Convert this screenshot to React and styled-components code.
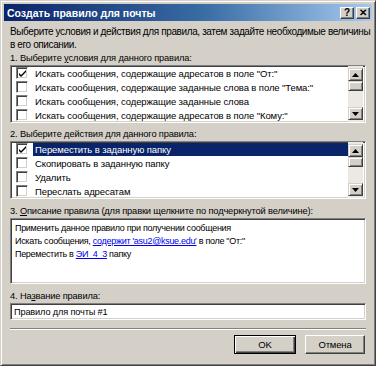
import React from "react";
import styled, { createGlobalStyle } from "styled-components";

const Global = createGlobalStyle`
  html, body {
    margin: 0;
    padding: 0;
    background: #d4d0c8;
  }
  body {
    font-family: "Liberation Sans", Arial, sans-serif;
    font-size: 10px;
    letter-spacing: -0.15px;
    color: #000;
  }
`;

const Window = styled.div`
  width: 376px;
  height: 366px;
  box-sizing: border-box;
  background: #d4d0c8;
  border: 1px solid;
  border-color: #d4d0c8 #404040 #404040 #d4d0c8;
  box-shadow: inset 1px 1px 0 #fff, inset -1px -1px 0 #808080;
  padding: 3px;
  display: flex;
  flex-direction: column;
  overflow: hidden;
`;

const TitleBar = styled.div`
  height: 17px;
  flex: none;
  display: flex;
  align-items: center;
  padding: 0 2px 0 3px;
  background: linear-gradient(to right, #0a246a 0%, #3a6ea5 55%, #a6caf0 100%);
  color: #fff;
  font-weight: bold;
  font-size: 10.5px;
`;

const Title = styled.span`
  flex: 1;
  letter-spacing: 0;
`;

const CapButton = styled.div`
  width: 14px;
  height: 12px;
  margin-left: ${(p) => (p.$gap ? "2px" : "0")};
  box-sizing: border-box;
  background: #d4d0c8;
  border: 1px solid;
  border-color: #fff #404040 #404040 #fff;
  box-shadow: inset -1px -1px 0 #808080;
  color: #000;
  font-size: 10px;
  font-weight: bold;
  letter-spacing: 0;
  display: flex;
  align-items: center;
  justify-content: center;
  line-height: 1;
`;

const Body = styled.div`
  flex: 1;
  display: flex;
  flex-direction: column;
  padding: 4px 6px 0 6px;
`;

const Intro = styled.p`
  margin: 0 0 1px 0;
  line-height: 13px;
  white-space: nowrap;
  letter-spacing: -0.38px;
`;

const Label = styled.div`
  line-height: 13px;
  font-size: 9.3px;
  white-space: nowrap;
  u {
    text-decoration: underline;
  }
`;

const Sunken = styled.div`
  box-sizing: border-box;
  background: #fff;
  border: 1px solid;
  border-color: #808080 #fff #fff #808080;
  box-shadow: inset 1px 1px 0 #404040, inset -1px -1px 0 #d4d0c8;
`;

const ListBox = styled(Sunken)`
  height: 58px;
  flex: none;
  display: flex;
  padding: 0 2px 0 2px;
  margin-bottom: ${(p) => p.$after}px;
`;

const Rows = styled.div`
  flex: 1;
  display: flex;
  flex-direction: column;
  overflow: hidden;
`;

const Row = styled.div`
  height: 14px;
  flex: none;
  display: flex;
  align-items: center;
  padding-left: 3px;
  white-space: nowrap;
  font-size: 9.5px;
  letter-spacing: -0.1px;
`;

const Check = styled.span`
  width: 12px;
  height: 12px;
  flex: none;
  box-sizing: border-box;
  background: #fff;
  border: 1px solid;
  border-color: #808080 #fff #fff #808080;
  box-shadow: inset 1px 1px 0 #404040, inset -1px -1px 0 #d4d0c8;
  display: flex;
  align-items: center;
  justify-content: center;
  margin-right: 5px;
`;

const RowText = styled.span`
  padding: 0 2px;
  line-height: 13px;
  background: ${(p) => (p.$selected ? "#0a246a" : "transparent")};
  color: ${(p) => (p.$selected ? "#fff" : "#000")};
  flex: ${(p) => (p.$selected ? 1 : "none")};
`;

const ScrollBar = styled.div`
  width: 15px;
  flex: none;
  display: flex;
  flex-direction: column;
  padding: 2px 0;
  background: #ece9e4;
`;

const ScrollBtn = styled.div`
  height: 13px;
  flex: none;
  box-sizing: border-box;
  background: #d4d0c8;
  border: 1px solid;
  border-color: #d4d0c8 #404040 #404040 #d4d0c8;
  box-shadow: inset 1px 1px 0 #fff, inset -1px -1px 0 #808080;
  display: flex;
  align-items: center;
  justify-content: center;
`;

const Track = styled.div`
  flex: 1;
`;

const Thumb = styled(ScrollBtn)`
  height: 10px;
`;

const DescBox = styled(Sunken)`
  height: 66px;
  flex: none;
  padding: 3px 4px;
  line-height: 13px;
  font-size: 9px;
  letter-spacing: -0.3px;
  margin-bottom: 6px;
  white-space: nowrap;
`;

const Link = styled.span`
  color: #0000ee;
  text-decoration: underline;
`;

const Input = styled(Sunken)`
  height: 17px;
  flex: none;
  padding: 0 3px;
  font-size: 9.2px;
  display: flex;
  align-items: center;
`;

const Separator = styled.div`
  margin-top: 8px;
  height: 0;
  flex: none;
  border-top: 1px solid #808080;
  border-bottom: 1px solid #fff;
`;

const Footer = styled.div`
  display: flex;
  justify-content: flex-end;
  gap: 9px;
  padding-top: 5px;
  padding-right: 1px;
  font-size: 9.5px;
`;

const Button = styled.div`
  width: ${(p) => (p.$default ? "62px" : "60px")};
  height: 19px;
  box-sizing: border-box;
  background: #d4d0c8;
  border: 1px solid;
  border-color: ${(p) => (p.$default ? "#000" : "#fff #404040 #404040 #fff")};
  box-shadow: ${(p) =>
    p.$default
      ? "inset 1px 1px 0 #fff, inset -1px -1px 0 #404040, inset -2px -2px 0 #808080"
      : "inset -1px -1px 0 #808080"};
  display: flex;
  align-items: center;
  justify-content: center;
`;

const Arrow = ({ down }) => (
  <svg width="7" height="4" viewBox="0 0 7 4">
    <path d={down ? "M0 0h7L3.5 4z" : "M3.5 0L7 4H0z"} fill="#000" />
  </svg>
);

const Tick = () => (
  <svg width="7" height="7" viewBox="0 0 7 7">
    <path d="M0 3l2 2 5-5v2L2 7 0 5z" fill="#000" />
  </svg>
);

function List({ items, selected, after }) {
  return (
    <ListBox $after={after}>
      <Rows>
        {items.map((it, i) => (
          <Row key={i}>
            <Check>{it.checked && <Tick />}</Check>
            <RowText $selected={selected === i}>{it.text}</RowText>
          </Row>
        ))}
      </Rows>
      <ScrollBar>
        <ScrollBtn>
          <Arrow />
        </ScrollBtn>
        <Thumb />
        <Track />
        <ScrollBtn>
          <Arrow down />
        </ScrollBtn>
      </ScrollBar>
    </ListBox>
  );
}

const conditions = [
  { checked: true, text: "Искать сообщения, содержащие адресатов в поле \"От:\"" },
  { checked: false, text: "Искать сообщения, содержащие заданные слова в поле \"Тема:\"" },
  { checked: false, text: "Искать сообщения, содержащие заданные слова" },
  { checked: false, text: "Искать сообщения, содержащие адресатов в поле \"Кому:\"" },
];

const actions = [
  { checked: true, text: "Переместить в заданную папку" },
  { checked: false, text: "Скопировать в заданную папку" },
  { checked: false, text: "Удалить" },
  { checked: false, text: "Переслать адресатам" },
];

export default function App() {
  return (
    <>
      <Global />
      <Window>
        <TitleBar>
          <Title>Создать правило для почты</Title>
          <CapButton>?</CapButton>
          <CapButton $gap>✕</CapButton>
        </TitleBar>
        <Body>
          <Intro>
            Выберите условия и действия для правила, затем задайте необходимые величины
            <br />в его описании.
          </Intro>
          <Label>
            1. Выберите <u>у</u>словия для данного правила:
          </Label>
          <List items={conditions} after={5} />
          <Label>
            2. Выберите <u>д</u>ействия для данного правила:
          </Label>
          <List items={actions} selected={0} after={6} />
          <Label>
            3. <u>О</u>писание правила (для правки щелкните по подчеркнутой величине):
          </Label>
          <DescBox>
            Применить данное правило при получении сообщения
            <br />
            Искать сообщения, <Link>содержит 'asu2@ksue.edu'</Link> в поле "От:"
            <br />
            Переместить в <Link>ЭИ_4_3</Link> папку
          </DescBox>
          <Label>
            4. На<u>з</u>вание правила:
          </Label>
          <Input>Правило для почты #1</Input>
          <Separator />
          <Footer>
            <Button $default>OK</Button>
            <Button>Отмена</Button>
          </Footer>
        </Body>
      </Window>
    </>
  );
}
